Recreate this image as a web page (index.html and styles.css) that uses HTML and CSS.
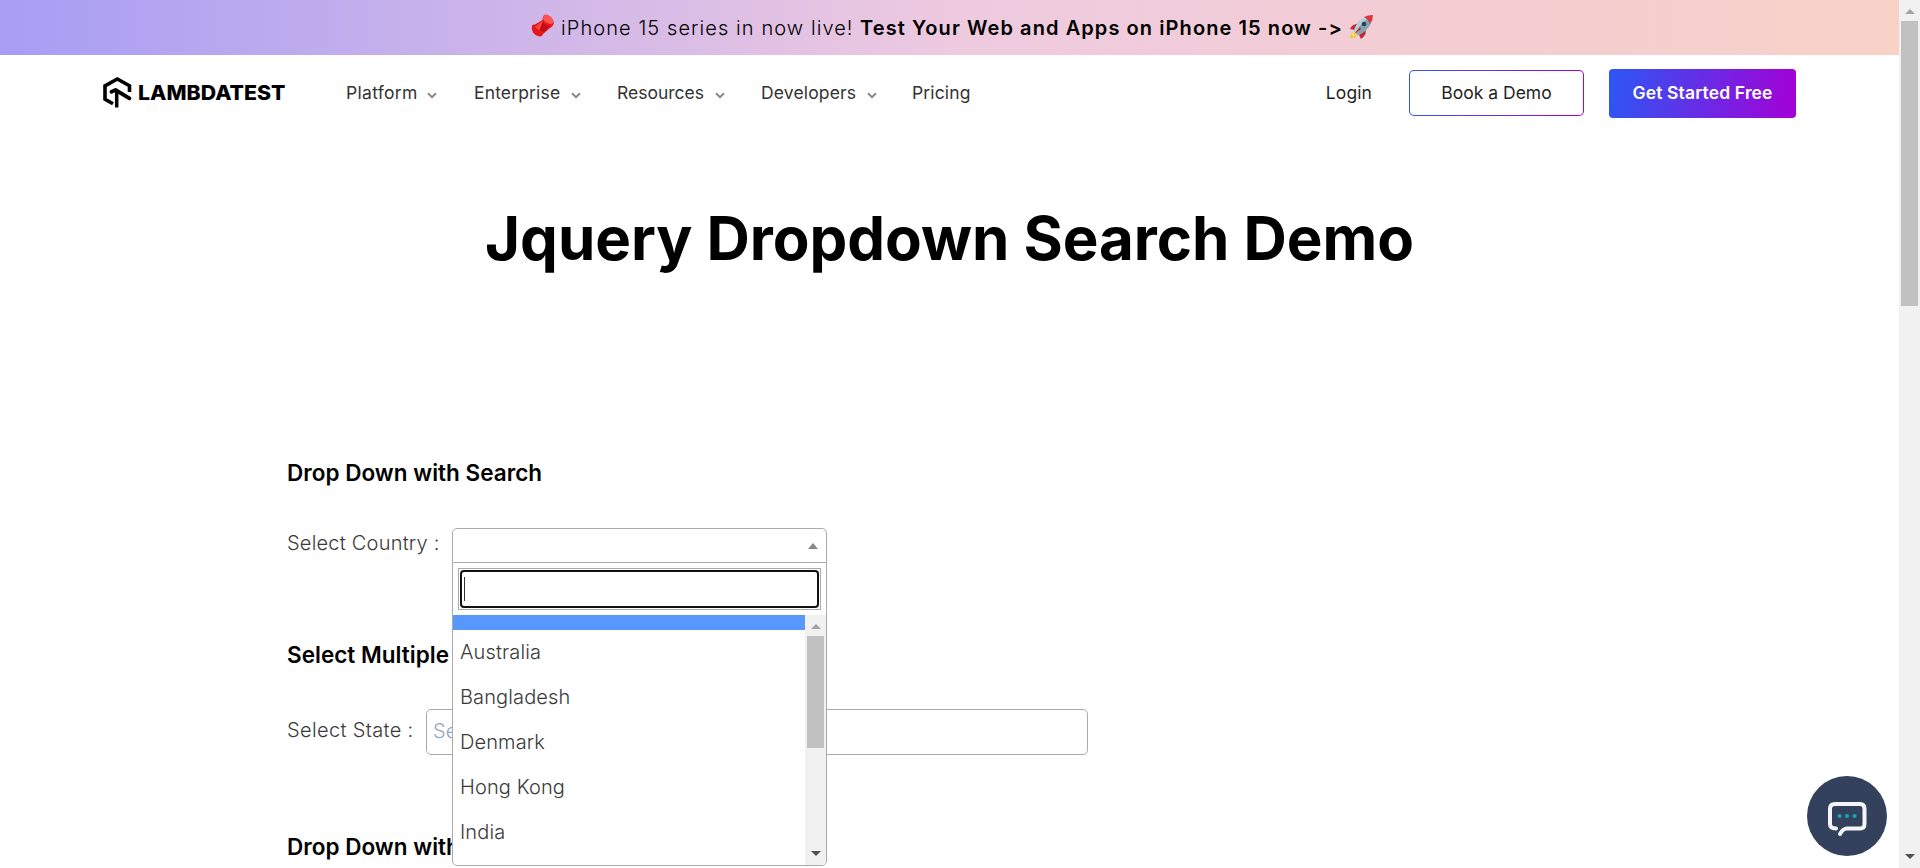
FILE: index.html
```html
<!DOCTYPE html>
<html lang="en">
<head>
<meta charset="utf-8">
<title>Jquery Dropdown Search Demo</title>
<link rel="stylesheet" href="styles.css">
</head>
<body>
<div class="window">
  <div class="page">
    <div class="banner">
      <svg class="pin" width="28" height="28" viewBox="0 0 28 28">
        <path d="M8.500 19 .8 27.500" stroke="#c4bfc6" stroke-width="1.600"/>
        <path d="M5 11.500Q4 15 6 18.500Q8.500 22 13 22.500Q15.500 22.500 16 20L23 14Q26.500 12 26.800 8.500Q25 1.500 18 .5Q15.500 2 15.500 6L8 10.500Q6 10 5 11.500Z" fill="#e6161c"/>
        <path d="M16 4Q17 .3 20 .7Q26 2.500 26.500 8Q25 11.500 20.500 9Q16 7 16 4Z" fill="#ff5352"/>
        <path d="M8 13 15.500 7 19 10 12 16.500Z" fill="#fb4541"/>
        <path d="M16 7Q18 11.500 23 12L16.500 18 12.500 16Z" fill="#c30d14"/>
      </svg>
      <span class="banner-text">iPhone 15 series in now live!</span>
      <b class="banner-bold">Test Your Web and Apps on iPhone 15 now -&gt;</b>
      <svg class="rocket" width="24" height="25" viewBox="0 0 24 25">
        <path d="M6 16Q1 18 1 23Q6 24 9 19Z" fill="#f4c83e"/>
        <path d="M5 17Q3 18 3 21Q6 21 8 18Z" fill="#fff0a0"/>
        <path d="M1 14Q3 9 9 9L6 15ZM10 20Q17 15 17 15Q17 21 12 24Z" fill="#c22a30"/>
        <path d="M5 16Q7 7 16 2L22 8Q18 17 9 20Z" fill="#7ea4b5"/>
        <path d="M5 16Q7 7 16 2L18 4Q10 10 7 18Z" fill="#b4d1db"/>
        <path d="M15 2Q19 0 24 0Q24 5 21 9Q19 4 15 2Z" fill="#d8373c"/>
        <circle cx="15" cy="9" r="2.300" fill="#33404b"/>
        <path d="M4 20 11 12 12 14Z" fill="#c22a30"/>
      </svg>
    </div>

    <header class="header">
      <svg class="logo" width="184" height="34" viewBox="0 0 184 34">
        <path d="M10 27.800 2 23.200V9.800L14.300 3 26.500 9.800V16" fill="none" stroke="#000" stroke-width="3.600"/>
        <path d="M8.500 15.700 12.500 14 26.500 22.300" fill="none" stroke="#000" stroke-width="3.800" stroke-linecap="round" stroke-linejoin="round"/>
        <path d="M13.700 15V31.500" stroke="#000" stroke-width="3.500"/>
        <text class="logo-text" x="35" y="23.500" textLength="147.500" lengthAdjust="spacingAndGlyphs">LAMBDATEST</text>
      </svg>
      <nav class="nav">
        <a class="nav-item platform">Platform<svg class="chevron" viewBox="0 0 10 7"><path d="M1 1.200 5 5.200 9 1.200"/></svg></a>
        <a class="nav-item enterprise">Enterprise<svg class="chevron" viewBox="0 0 10 7"><path d="M1 1.200 5 5.200 9 1.200"/></svg></a>
        <a class="nav-item resources">Resources<svg class="chevron" viewBox="0 0 10 7"><path d="M1 1.200 5 5.200 9 1.200"/></svg></a>
        <a class="nav-item developers">Developers<svg class="chevron" viewBox="0 0 10 7"><path d="M1 1.200 5 5.200 9 1.200"/></svg></a>
        <a class="nav-item">Pricing</a>
      </nav>
      <div class="actions">
        <a class="login">Login</a>
        <a class="book">Book a Demo</a>
        <a class="start">Get Started Free</a>
      </div>
    </header>

    <main class="main">
      <h1 class="title">Jquery Dropdown Search Demo</h1>
      <section class="section country-section">
        <h2 class="section-title">Drop Down with Search</h2>
        <div class="field">
          <span class="label country-label">Select Country :</span>
          <div class="select">
            <div class="select-box"><svg width="10" height="6" viewBox="0 0 10 6"><path d="M0 6 5 0 10 6Z" fill="#888"/></svg></div>
            <div class="menu">
              <div class="search-wrap"><div class="search"><i class="caret"></i></div></div>
              <div class="options">
                <div class="option-list">
                  <div class="option blank"></div>
                  <div class="option">Australia</div>
                  <div class="option">Bangladesh</div>
                  <div class="option">Denmark</div>
                  <div class="option">Hong Kong</div>
                  <div class="option">India</div>
                </div>
                <div class="bar menu-bar">
                  <svg class="arrow" viewBox="0 0 10 5"><path d="M0 5 5 0 10 5Z" fill="#a3a3a3"/></svg>
                  <div class="thumb"></div>
                  <svg class="arrow down" viewBox="0 0 10 5"><path d="M0 0 5 5 10 0Z" fill="#505050"/></svg>
                </div>
              </div>
            </div>
          </div>
        </div>
      </section>
      <section class="section state-section">
        <h2 class="section-title">Select Multiple</h2>
        <div class="field">
          <span class="label state-label">Select State :</span>
          <div class="multi">Se</div>
        </div>
      </section>
      <section class="section">
        <h2 class="section-title">Drop Down with</h2>
      </section>
    </main>
  </div>
  <div class="bar page-bar">
    <svg class="arrow" viewBox="0 0 10 5"><path d="M0 5 5 0 10 5Z" fill="#a3a3a3"/></svg>
    <div class="thumb"></div>
    <svg class="arrow down" viewBox="0 0 10 5"><path d="M0 0 5 5 10 0Z" fill="#505050"/></svg>
  </div>
  <svg class="chat" width="80" height="80" viewBox="0 0 80 80">
    <circle cx="40" cy="40" r="40" fill="#33415c"/>
    <path d="M29 52.500Q23 52.500 23 48V33Q23 28 28 28H53Q57.500 28 57.500 33V48Q57.500 52.500 53 52.500H40Q36 52.500 33 58" fill="none" stroke="#f4f5f7" stroke-width="4" stroke-linecap="round"/>
    <g fill="#12a7b4"><circle cx="32.500" cy="40" r="2.100"/><circle cx="40" cy="40" r="2.100"/><circle cx="47.500" cy="40" r="2.100"/></g>
  </svg>
</div>
</body>
</html>
```

FILE: styles.css
```css
* { box-sizing: border-box; }
body { margin: 0; background: #fff; font-family: Inter, "Liberation Sans", sans-serif; overflow: hidden; }
.window { display: flex; position: relative; width: 1920px; height: 868px; overflow: hidden; }
.page { width: 1899px; height: 868px; overflow: hidden; }

.banner { display: flex; align-items: center; height: 55px; padding-left: 527px; font-size: 20px; line-height: 30px; color: #000; white-space: nowrap; background: linear-gradient(90deg, #a79df4 0%, #eecae0 50%, #f8d1c7 100%); }
.pin { margin: 1px 6px 0 0; flex: none; }
.banner-text { width: 299px; font-weight: 300; letter-spacing: 1.08px; }
.banner-bold { width: 489px; font-weight: 600; letter-spacing: 1.08px; }
.rocket { flex: none; }

.header { display: flex; align-items: center; height: 77px; padding: 0 103px 0 103px; font-size: 17.5px; color: #1f1f1f; white-space: nowrap; }
.logo { flex: none; margin: -1px 59px 0 0; }
.logo-text { font: 800 20.500px Inter, sans-serif; fill: #000; }
.nav { display: flex; flex: 1; margin-top: -2px; }
.nav-item { display: flex; align-items: center; justify-content: space-between; color: #333; letter-spacing: .15px; }
.platform { width: 91px; margin-right: 37px; letter-spacing: .3px; }
.enterprise { width: 107px; margin-right: 36px; }
.resources { width: 108px; margin-right: 36px; letter-spacing: 0; }
.developers { width: 116px; margin-right: 35px; }
.chevron { width: 10px; height: 7px; margin-top: 5px; fill: none; stroke: #888; stroke-width: 2; }
.actions { display: flex; align-items: center; }
.login { margin: -2px 37px 0 0; letter-spacing: .1px; }
.book { display: flex; align-items: center; justify-content: center; width: 175px; height: 46px; margin: -1px 25px 0 0; padding-bottom: 1px; border: 1px solid transparent; border-radius: 5px; background: linear-gradient(#fff, #fff) padding-box, linear-gradient(90deg, #2c57f5, #a400d6) border-box; }
.start { display: flex; align-items: center; justify-content: center; width: 187px; height: 49px; padding-bottom: 2px; border-radius: 4px; color: #fff; font-weight: 600; letter-spacing: .15px; background: linear-gradient(97deg, #2c57f5, #a400d6); }

.title { margin: 66px 0 0; height: 260px; text-align: center; font-size: 60px; line-height: 80px; letter-spacing: -.04px; font-weight: 700; color: #000; }
.section { padding-left: 287px; }
.country-section { height: 182px; }
.state-section { height: 192px; }
.section-title { margin: 0; font-size: 22.5px; line-height: 30px; letter-spacing: .02px; font-weight: 600; color: #000; }
.field { display: flex; align-items: flex-start; padding-top: 40px; font-size: 20px; font-weight: 300; color: #3a3a3a; white-space: nowrap; }
.label { line-height: 30px; letter-spacing: .22px; }
.country-label { width: 165px; }
.state-label { width: 139px; padding-top: 6px; letter-spacing: .35px; }
.state-section .field { padding-top: 39px; }
.select { position: relative; width: 375px; }
.select-box { display: flex; align-items: center; justify-content: flex-end; height: 35px; padding-right: 8px; border: 1px solid #aaa; border-radius: 5px 5px 0 0; background: #fff; }
.menu { position: absolute; z-index: 2; top: 34px; left: 0; width: 375px; height: 304px; padding-top: 5px; border: 1px solid #aaa; border-radius: 0 0 5px 5px; background: #fff; overflow: hidden; }
.search-wrap { height: 42px; margin: 0 5px 5px; padding: 1px; border: 1px solid #aaa; }
.search { height: 38px; padding: 5px 2px; border: 2px solid #101010; border-radius: 4px; }
.caret { display: block; width: 1px; height: 24px; background: #333; }
.options { display: flex; height: 250px; }
.option-list { flex: 1; overflow: hidden; }
.option { height: 45px; padding-left: 7px; line-height: 45px; letter-spacing: .12px; }
.blank { height: 15px; background: #5897fb; }
.multi { width: 662px; height: 46px; padding-left: 6px; line-height: 43px; border: 1px solid #aaa; border-radius: 5px; color: #91a7bd; }

.bar { display: flex; flex-direction: column; align-items: center; width: 21px; background: #f1f1f1; }
.arrow { width: 10px; height: 5px; margin: 9px 0 7px; flex: none; }
.bar .thumb { width: 17px; background: #c1c1c1; }
.down { margin: auto 0 9px; }
.menu-bar .thumb { height: 112px; }
.page-bar { height: 868px; }
.page-bar .thumb { height: 285px; }
.chat { position: absolute; left: 1807px; top: 776px; }
```
